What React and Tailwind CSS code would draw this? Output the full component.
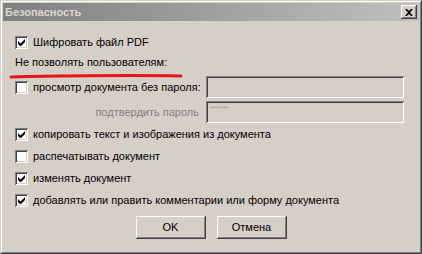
import React from 'react';

const font = { fontFamily: '"Liberation Sans", Arial, sans-serif' };

const Check = ({ on }) => (
  <div className="w-[13px] h-[13px] shrink-0 bg-white shadow-[inset_1px_1px_0_#808080,inset_-1px_-1px_0_#ffffff,inset_2px_2px_0_#404040,inset_-2px_-2px_0_#d4d0c8] flex items-center justify-center">
    {on && (
      <svg width="7" height="7" viewBox="0 0 7 7">
        <path d="M0 2v3l2 2h1l4-4V0L2.5 4.5z" fill="#000" />
      </svg>
    )}
  </div>
);

const Row = ({ on, label }) => (
  <div className="h-[22px] flex items-center gap-[5px]">
    <Check on={on} />
    <span className="text-[11px] text-black leading-none">{label}</span>
  </div>
);

const Field = ({ children }) => (
  <div className="w-[198px] h-[22px] bg-[#d4d0c8] shadow-[inset_1px_1px_0_#808080,inset_-1px_-1px_0_#ffffff,inset_2px_2px_0_#404040,inset_-2px_-2px_0_#d4d0c8] px-[4px] pt-[4px]">
    {children}
  </div>
);

const Button = ({ children }) => (
  <button className="w-[70px] h-[23px] bg-[#d4d0c8] text-[11px] text-black shadow-[inset_-1px_-1px_0_#404040,inset_1px_1px_0_#ffffff,inset_-2px_-2px_0_#808080]">
    {children}
  </button>
);

export default function App() {
  const rights = [
    { on: true, label: 'копировать текст и изображения из документа' },
    { on: false, label: 'распечатывать документ' },
    { on: true, label: 'изменять документ' },
    { on: true, label: 'добавлять или править комментарии или форму документа' },
  ];

  return (
    <div style={font} className="w-[422px] h-[254px] bg-[#d4d0c8] border border-t-[#d4d0c8] border-l-[#d4d0c8] border-r-[#404040] border-b-[#404040] overflow-hidden">
      <div className="h-full border border-t-white border-l-white border-r-[#808080] border-b-[#808080] p-px relative">
        {/* title bar */}
        <div className="h-[18px] bg-gradient-to-r from-[#808080] to-[#c0c0c0] flex items-center justify-between pl-[2px] pr-[2px]">
          <span className="text-[11px] font-bold text-[#dcd8d0] leading-none">Безопасность</span>
          <div className="w-[16px] h-[14px] bg-[#d4d0c8] shadow-[inset_-1px_-1px_0_#404040,inset_1px_1px_0_#ffffff,inset_-2px_-2px_0_#808080] flex items-center justify-center">
            <svg width="8" height="7" viewBox="0 0 8 7">
              <path d="M0 0h2l2 2 2-2h2L5 3.5 8 7H6L4 5 2 7H0l3-3.5z" fill="#000" />
            </svg>
          </div>
        </div>

        <div className="pl-[12px] pr-[12px] pt-[11px]">
          <div className="h-[20px] flex items-center gap-[5px]">
            <Check on />
            <span className="text-[11px] text-black leading-none">Шифровать файл PDF</span>
          </div>
          <div className="h-[20px] flex items-center text-[11px] text-black">Не позволять пользователям:</div>

          <div className="mt-[4px] flex flex-col gap-[3px]">
            <div className="flex items-center">
              <div className="w-[191px] flex items-center gap-[5px]">
                <Check on={false} />
                <span className="text-[11px] text-black leading-none">просмотр документа без пароля:</span>
              </div>
              <Field />
            </div>
            <div className="flex items-center">
              <div className="w-[191px] pr-[7px] text-right text-[11px] text-[#808080]">подтвердить пароль</div>
              <Field>
                <span className="block text-[8px] leading-none text-[#a0a0a0]">******</span>
              </Field>
            </div>
          </div>

          <div className="flex flex-col">
            {rights.map((r) => (
              <Row key={r.label} on={r.on} label={r.label} />
            ))}
          </div>

          <div className="mt-[5px] flex justify-center gap-[11px]">
            <Button>OK</Button>
            <Button>Отмена</Button>
          </div>
        </div>

        {/* red annotation stroke */}
        <svg className="absolute left-[7px] top-[70px] pointer-events-none" width="176" height="8" viewBox="0 0 176 8">
          <path d="M2 5 C 50 4, 120 3, 172 4" stroke="#e8141c" strokeWidth="3" fill="none" strokeLinecap="round" />
        </svg>
      </div>
    </div>
  );
}
